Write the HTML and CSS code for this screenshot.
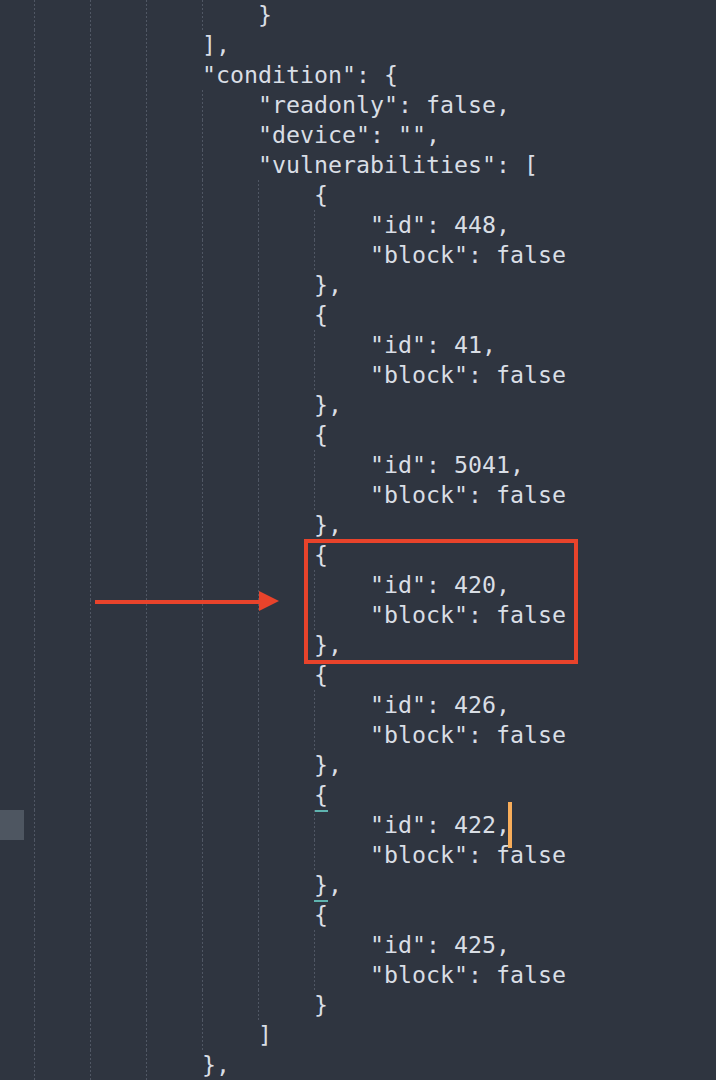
FILE: index.html
```html
<!DOCTYPE html>
<html>
<head>
<meta charset="utf-8">
<link rel="stylesheet" href="styles.css">
</head>
<body>
<div class="editor">
<div class="code">
<div class="ln"><span class="ind"></span><span class="ind"></span><span class="ind"></span><span class="ind"></span><span class="ind"></span><span class="t">}</span></div>
<div class="ln"><span class="ind"></span><span class="ind"></span><span class="ind"></span><span class="ind"></span><span class="t">],</span></div>
<div class="ln"><span class="ind"></span><span class="ind"></span><span class="ind"></span><span class="ind"></span><span class="t">"condition": {</span></div>
<div class="ln"><span class="ind"></span><span class="ind"></span><span class="ind"></span><span class="ind"></span><span class="ind"></span><span class="t">"readonly": false,</span></div>
<div class="ln"><span class="ind"></span><span class="ind"></span><span class="ind"></span><span class="ind"></span><span class="ind"></span><span class="t">"device": "",</span></div>
<div class="ln"><span class="ind"></span><span class="ind"></span><span class="ind"></span><span class="ind"></span><span class="ind"></span><span class="t">"vulnerabilities": [</span></div>

<div class="ln"><span class="ind"></span><span class="ind"></span><span class="ind"></span><span class="ind"></span><span class="ind"></span><span class="ind"></span><span class="t">{</span></div>
<div class="ln"><span class="ind"></span><span class="ind"></span><span class="ind"></span><span class="ind"></span><span class="ind"></span><span class="ind"></span><span class="ind"></span><span class="t">"id": 448,</span></div>
<div class="ln"><span class="ind"></span><span class="ind"></span><span class="ind"></span><span class="ind"></span><span class="ind"></span><span class="ind"></span><span class="ind"></span><span class="t">"block": false</span></div>
<div class="ln"><span class="ind"></span><span class="ind"></span><span class="ind"></span><span class="ind"></span><span class="ind"></span><span class="ind"></span><span class="t">},</span></div>

<div class="ln"><span class="ind"></span><span class="ind"></span><span class="ind"></span><span class="ind"></span><span class="ind"></span><span class="ind"></span><span class="t">{</span></div>
<div class="ln"><span class="ind"></span><span class="ind"></span><span class="ind"></span><span class="ind"></span><span class="ind"></span><span class="ind"></span><span class="ind"></span><span class="t">"id": 41,</span></div>
<div class="ln"><span class="ind"></span><span class="ind"></span><span class="ind"></span><span class="ind"></span><span class="ind"></span><span class="ind"></span><span class="ind"></span><span class="t">"block": false</span></div>
<div class="ln"><span class="ind"></span><span class="ind"></span><span class="ind"></span><span class="ind"></span><span class="ind"></span><span class="ind"></span><span class="t">},</span></div>

<div class="ln"><span class="ind"></span><span class="ind"></span><span class="ind"></span><span class="ind"></span><span class="ind"></span><span class="ind"></span><span class="t">{</span></div>
<div class="ln"><span class="ind"></span><span class="ind"></span><span class="ind"></span><span class="ind"></span><span class="ind"></span><span class="ind"></span><span class="ind"></span><span class="t">"id": 5041,</span></div>
<div class="ln"><span class="ind"></span><span class="ind"></span><span class="ind"></span><span class="ind"></span><span class="ind"></span><span class="ind"></span><span class="ind"></span><span class="t">"block": false</span></div>
<div class="ln"><span class="ind"></span><span class="ind"></span><span class="ind"></span><span class="ind"></span><span class="ind"></span><span class="ind"></span><span class="t">},</span></div>

<div class="ln"><span class="ind"></span><span class="ind"></span><span class="ind"></span><span class="ind"></span><span class="ind"></span><span class="ind"></span><span class="t">{</span></div>
<div class="ln"><span class="ind"></span><span class="ind"></span><span class="ind"></span><span class="ind"></span><span class="ind"></span><span class="ind"></span><span class="ind"></span><span class="t">"id": 420,</span></div>
<div class="ln"><span class="ind"></span><span class="ind"></span><span class="ind"></span><span class="ind"></span><span class="ind"></span><span class="ind"></span><span class="ind"></span><span class="t">"block": false</span></div>
<div class="ln"><span class="ind"></span><span class="ind"></span><span class="ind"></span><span class="ind"></span><span class="ind"></span><span class="ind"></span><span class="t">},</span></div>

<div class="ln"><span class="ind"></span><span class="ind"></span><span class="ind"></span><span class="ind"></span><span class="ind"></span><span class="ind"></span><span class="t">{</span></div>
<div class="ln"><span class="ind"></span><span class="ind"></span><span class="ind"></span><span class="ind"></span><span class="ind"></span><span class="ind"></span><span class="ind"></span><span class="t">"id": 426,</span></div>
<div class="ln"><span class="ind"></span><span class="ind"></span><span class="ind"></span><span class="ind"></span><span class="ind"></span><span class="ind"></span><span class="ind"></span><span class="t">"block": false</span></div>
<div class="ln"><span class="ind"></span><span class="ind"></span><span class="ind"></span><span class="ind"></span><span class="ind"></span><span class="ind"></span><span class="t">},</span></div>

<div class="ln"><span class="ind"></span><span class="ind"></span><span class="ind"></span><span class="ind"></span><span class="ind"></span><span class="ind"></span><span class="t"><span class="match">{</span></span></div>
<div class="ln active"><span class="ind"></span><span class="ind"></span><span class="ind"></span><span class="ind"></span><span class="ind"></span><span class="ind"></span><span class="ind"></span><span class="t">"id": 422,<span class="cursor"></span></span></div>
<div class="ln"><span class="ind"></span><span class="ind"></span><span class="ind"></span><span class="ind"></span><span class="ind"></span><span class="ind"></span><span class="ind"></span><span class="t">"block": false</span></div>
<div class="ln"><span class="ind"></span><span class="ind"></span><span class="ind"></span><span class="ind"></span><span class="ind"></span><span class="ind"></span><span class="t"><span class="match">}</span>,</span></div>

<div class="ln"><span class="ind"></span><span class="ind"></span><span class="ind"></span><span class="ind"></span><span class="ind"></span><span class="ind"></span><span class="t">{</span></div>
<div class="ln"><span class="ind"></span><span class="ind"></span><span class="ind"></span><span class="ind"></span><span class="ind"></span><span class="ind"></span><span class="ind"></span><span class="t">"id": 425,</span></div>
<div class="ln"><span class="ind"></span><span class="ind"></span><span class="ind"></span><span class="ind"></span><span class="ind"></span><span class="ind"></span><span class="ind"></span><span class="t">"block": false</span></div>
<div class="ln"><span class="ind"></span><span class="ind"></span><span class="ind"></span><span class="ind"></span><span class="ind"></span><span class="ind"></span><span class="t">}</span></div>

<div class="ln"><span class="ind"></span><span class="ind"></span><span class="ind"></span><span class="ind"></span><span class="ind"></span><span class="t">]</span></div>
<div class="ln"><span class="ind"></span><span class="ind"></span><span class="ind"></span><span class="ind"></span><span class="t">},</span></div>
</div>

<div class="annot-box"></div>
<svg class="annot-arrow" width="185" height="22" viewBox="0 0 185 22">
  <rect x="0" y="10" width="165" height="4" fill="#e8432b"/>
  <polygon points="164,1 184,11 164,21" fill="#e8432b"/>
</svg>
</div>
</body>
</html>
```

FILE: styles.css
```css
html, body {
  margin: 0;
  padding: 0;
  background: #2f3540;
  overflow: hidden;
}

.editor {
  position: relative;
  width: 716px;
  height: 1080px;
  overflow: hidden;
  background: #2f3540;
}

.code {
  margin-left: -22px;
  font-family: "DejaVu Sans Mono", "Liberation Mono", monospace;
  font-size: 23.25px;
  color: #d9dee5;
}

.ln {
  position: relative;
  display: flex;
  height: 30px;
  line-height: 30px;
  white-space: pre;
}

.ind {
  flex: 0 0 56px;
  width: 56px;
  height: 30px;
  background-image: repeating-linear-gradient(to bottom, #505764 0 2px, transparent 2px 4px);
  background-size: 1px 100%;
  background-repeat: no-repeat;
  background-position: left top;
}

.t {
  display: inline-block;
  height: 30px;
}

.match {
  position: relative;
  display: inline-block;
  vertical-align: top;
  height: 30px;
}

.match::after {
  content: "";
  position: absolute;
  left: 0;
  right: 0;
  bottom: -2px;
  height: 2px;
  background: #5fb4b0;
}

.cursor {
  position: relative;
  display: inline-block;
  vertical-align: top;
  width: 0;
  height: 30px;
}

.cursor::after {
  content: "";
  position: absolute;
  left: -2px;
  top: -8px;
  width: 4px;
  height: 46px;
  background: #f8ad5a;
}

.active::before {
  content: "";
  position: absolute;
  left: 22px;
  top: 0;
  width: 24px;
  height: 30px;
  background: #4e5661;
}

.annot-box {
  position: absolute;
  left: 304px;
  top: 539px;
  width: 266px;
  height: 117px;
  border: 4px solid #e8432b;
}

.annot-arrow {
  position: absolute;
  left: 95px;
  top: 590px;
}
```
